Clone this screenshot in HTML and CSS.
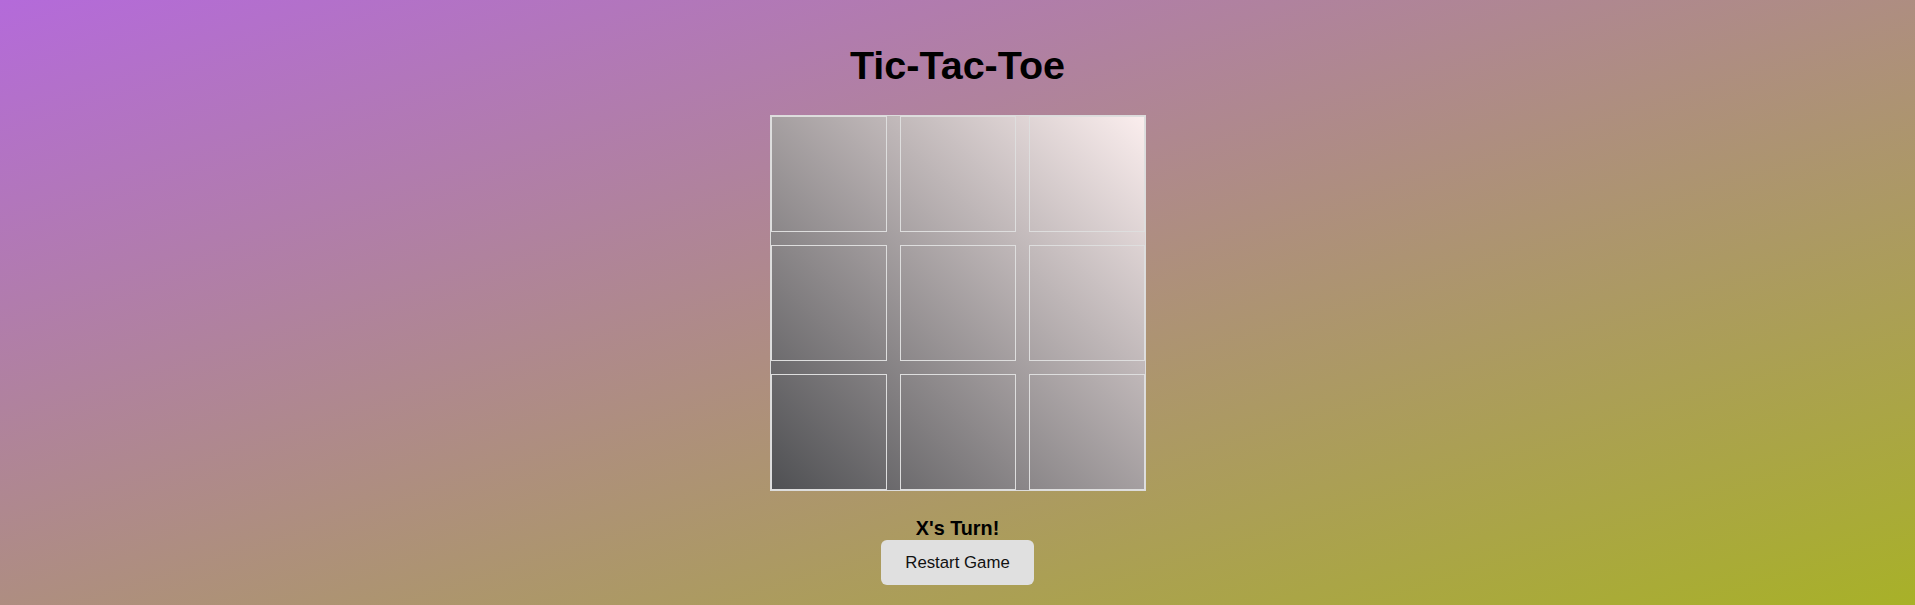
FILE: index.html
```html
<!DOCTYPE html>
<html lang="en">
<head>
<meta charset="utf-8">
<title>Tic-Tac-Toe</title>
<link rel="stylesheet" href="styles.css">
</head>
<body>
<main class="game">
  <h1 class="title">Tic-Tac-Toe</h1>
  <div class="board">
    <div class="cell"></div>
    <div class="cell"></div>
    <div class="cell"></div>
    <div class="cell"></div>
    <div class="cell"></div>
    <div class="cell"></div>
    <div class="cell"></div>
    <div class="cell"></div>
    <div class="cell"></div>
  </div>
  <div class="status">X's Turn!</div>
  <button class="restart">Restart Game</button>
</main>
</body>
</html>
```

FILE: styles.css
```css
html, body {
  margin: 0;
  padding: 0;
  height: 100%;
}

body {
  font-family: "Liberation Sans", Arial, sans-serif;
  background: linear-gradient(to bottom right, #b46ada, #a8b128);
  color: #000;
  overflow: hidden;
}

.game {
  display: flex;
  flex-direction: column;
  align-items: center;
}

.title {
  margin: 43px 0 28px;
  font-size: 39.5px;
  line-height: 44px;
  font-weight: bold;
}

.board {
  display: grid;
  grid-template-columns: repeat(3, 116px);
  grid-template-rows: repeat(3, 116px);
  gap: 13px;
  border: 1px solid #dcdcdc;
  background: linear-gradient(45deg, #4f5053, #fbeeee);
}

.cell {
  border: 1px solid #dedede;
  box-sizing: border-box;
}

.status {
  margin-top: 25.5px;
  margin-bottom: 1.5px;
  font-size: 19.8px;
  line-height: 22px;
  font-weight: bold;
}

.restart {
  font-family: "Liberation Sans", Arial, sans-serif;
  font-size: 16.8px;
  line-height: 21px;
  padding: 12px 24px;
  border: none;
  border-radius: 6px;
  background: #e0e0e0;
  color: #111;
}
```
